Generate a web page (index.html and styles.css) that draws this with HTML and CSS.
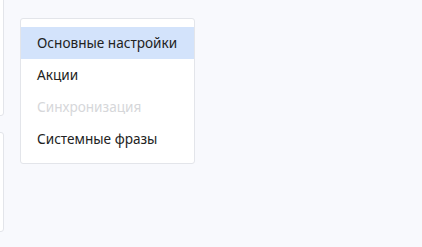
FILE: index.html
```html
<!DOCTYPE html>
<html>
<head>
<meta charset="utf-8">
<link rel="stylesheet" href="styles.css">
</head>
<body>
<div class="page">
  <div class="side">
    <div class="side-card top"></div>
    <div class="side-card bottom"></div>
  </div>
  <div class="menu">
    <div class="item active">Основные настройки</div>
    <div class="item">Акции</div>
    <div class="item disabled">Синхронизация</div>
    <div class="item">Системные фразы</div>
  </div>
</div>
</body>
</html>
```
FILE: styles.css
```css
html, body {
  margin: 0;
  padding: 0;
  background: #f8f9fd;
  width: 422px;
  height: 247px;
  overflow: hidden;
}
.page {
  display: flex;
  align-items: flex-start;
  gap: 16px;
  font-family: "Noto Sans", "Open Sans", sans-serif;
}
.side {
  width: 4px;
  display: flex;
  flex-direction: column;
  gap: 16px;
  margin-top: -20px;
}
.side-card {
  background: #fff;
  border: 1px solid #e3e5ea;
  border-radius: 3px;
  margin-left: -20px;
  width: 22px;
}
.side-card.top { height: 134px; }
.side-card.bottom { height: 98px; }
.menu {
  margin-top: 18px;
  width: 173px;
  background: #fff;
  border: 1px solid #e3e5ea;
  border-radius: 3px;
  padding: 8px 0;
}
.item {
  height: 32px;
  line-height: 32px;
  padding-left: 16px;
  font-size: 13.6px;
  color: #222;
}
.item.active { background: #d3e3fb; }
.item.disabled { color: #d6d7da; }
```
